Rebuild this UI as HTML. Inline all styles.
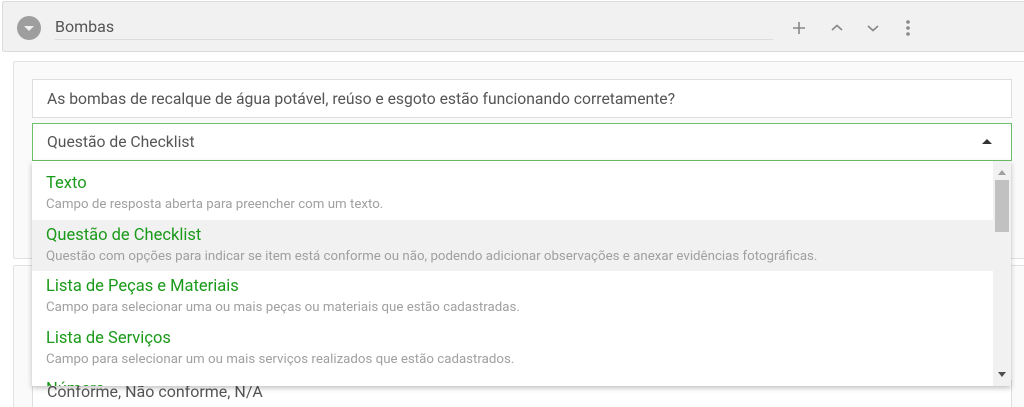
<!DOCTYPE html>
<html><head><meta charset="utf-8"><style>
*{box-sizing:border-box;margin:0;padding:0}
html,body{width:1024px;height:407px;overflow:hidden}
body{background:#fff;font-family:"Roboto","Liberation Sans",sans-serif;position:relative}
.hdr{position:absolute;left:2px;top:1px;width:1030px;height:51px;background:#f1f1f1;border:1px solid #dcdcdc;border-radius:2px}
.circ{position:absolute;left:14px;top:14px;width:24px;height:24px;border-radius:50%;background:#9e9e9e}
.circ:after{content:"";position:absolute;left:7px;top:10px;border-left:5px solid transparent;border-right:5px solid transparent;border-top:5px solid #f1f1f1}
.title{position:absolute;left:52px;top:15px;font-size:16px;color:#555}
.uline{position:absolute;left:52px;top:37px;width:718px;height:1px;background:#ddd}
.card{position:absolute;left:13px;width:1020px;background:#fafafa;border:1px solid #e2e2e2;border-radius:2px}
.box{position:absolute;left:32px;width:980px;background:#fff;border:1px solid #dedede;font-size:16px;color:#555;padding-left:14px}
.dd{position:absolute;left:32px;top:161px;width:979px;height:225px;background:#fff;box-shadow:0 2px 5px rgba(0,0,0,.25);overflow:hidden;padding-top:7px}
.it{height:51.5px;padding:6px 0 0 14px}
.it b{display:block;font-weight:normal;color:#1a9a1a;font-size:16.5px;line-height:20px}
.it i{display:block;font-style:normal;color:#a0a0a0;font-size:13.3px;line-height:16px;margin-top:3px}
.sb{position:absolute;right:0;top:0;width:18px;height:225px;background:#f1f1f1}
</style></head><body>
<div class="hdr">
<div class="circ"></div>
<div class="title">Bombas</div>
<div class="uline"></div>
<svg style="position:absolute;left:789px;top:19px" width="14" height="14"><path d="M7 1V13M1 7H13" stroke="#888" stroke-width="1.6"/></svg>
<svg style="position:absolute;left:828px;top:22px" width="12" height="8"><path d="M1 6L6 1.5L11 6" stroke="#888" stroke-width="1.6" fill="none"/></svg>
<svg style="position:absolute;left:864px;top:22px" width="12" height="8"><path d="M1 2L6 6.5L11 2" stroke="#888" stroke-width="1.6" fill="none"/></svg>
<svg style="position:absolute;left:902px;top:17px" width="6" height="18"><circle cx="3" cy="3" r="1.8" fill="#888"/><circle cx="3" cy="9" r="1.8" fill="#888"/><circle cx="3" cy="15" r="1.8" fill="#888"/></svg>
</div>
<div class="card" style="top:61px;height:198px"></div>
<div class="card" style="top:265px;height:160px"></div>
<div class="box" style="top:79px;height:39px;line-height:37px;font-size:15.7px">As bombas de recalque de água potável, reúso e esgoto estão funcionando corretamente?</div>
<div class="box" style="top:380px;height:40px;line-height:22px">Conforme, Não conforme, N/A</div>
<div class="box" style="top:123px;height:38px;line-height:36px;border-color:#6cc06c;font-size:15.7px">Questão de Checklist
<span style="position:absolute;right:19px;top:15px;border-left:5px solid transparent;border-right:5px solid transparent;border-bottom:5px solid #333"></span></div>
<div class="dd">
<div class="it"><b>Texto</b><i>Campo de resposta aberta para preencher com um texto.</i></div>
<div class="it" style="background:#f1f1f1"><b>Questão de Checklist</b><i>Questão com opções para indicar se item está conforme ou não, podendo adicionar observações e anexar evidências fotográficas.</i></div>
<div class="it"><b>Lista de Peças e Materiais</b><i>Campo para selecionar uma ou mais peças ou materiais que estão cadastradas.</i></div>
<div class="it"><b>Lista de Serviços</b><i>Campo para selecionar um ou mais serviços realizados que estão cadastrados.</i></div>
<div class="it"><b>Número</b></div>
<div class="sb">
<span style="position:absolute;left:5px;top:9px;border-left:4px solid transparent;border-right:4px solid transparent;border-bottom:5px solid #a0a0a0"></span>
<div style="position:absolute;left:2px;top:19px;width:14px;height:52px;background:#c1c1c1"></div>
<span style="position:absolute;left:5px;top:211px;border-left:4px solid transparent;border-right:4px solid transparent;border-top:5px solid #505050"></span>
</div>
</div>
</body></html>
